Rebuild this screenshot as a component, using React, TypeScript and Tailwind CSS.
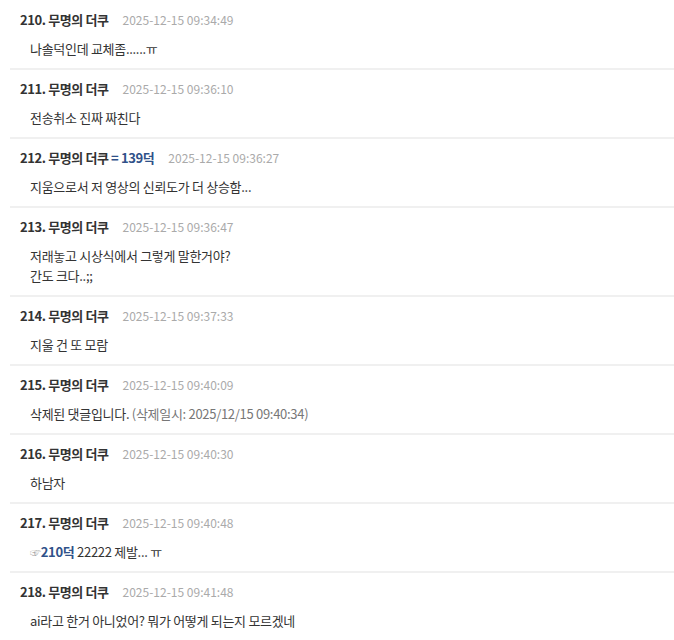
type Comment = {
  no: number;
  time: string;
  lines: React.ReactNode[];
  tag?: string;
};

const comments: Comment[] = [
  { no: 210, time: "2025-12-15 09:34:49", lines: ["나솔덕인데 교체좀......ㅠ"] },
  { no: 211, time: "2025-12-15 09:36:10", lines: ["전송취소 진짜 짜친다"] },
  {
    no: 212,
    time: "2025-12-15 09:36:27",
    tag: "= 139덕",
    lines: ["지움으로서 저 영상의 신뢰도가 더 상승함..."],
  },
  {
    no: 213,
    time: "2025-12-15 09:36:47",
    lines: ["저래놓고 시상식에서 그렇게 말한거야?", "간도 크다..;;"],
  },
  { no: 214, time: "2025-12-15 09:37:33", lines: ["지울 건 또 모람"] },
  {
    no: 215,
    time: "2025-12-15 09:40:09",
    lines: [
      <>
        삭제된 댓글입니다. <span className="text-[#777]">(삭제일시: 2025/12/15 09:40:34)</span>
      </>,
    ],
  },
  { no: 216, time: "2025-12-15 09:40:30", lines: ["하남자"] },
  {
    no: 217,
    time: "2025-12-15 09:40:48",
    lines: [
      <>
        <span className="text-[#aaa] text-[11px]">☞</span>
        <span className="font-bold text-[#2f5189]">210덕</span> 22222 제발... ㅠ
      </>,
    ],
  },
  {
    no: 218,
    time: "2025-12-15 09:41:48",
    lines: ["ai라고 한거 아니었어? 뭐가 어떻게 되는지 모르겠네"],
  },
];

export default function App() {
  return (
    <div
      className="min-h-screen bg-white text-[#333]"
      style={{ fontFamily: '"Noto Sans CJK KR", "Noto Sans", sans-serif' }}
    >
      <ul className="ml-[10px]">
        {comments.map((c, i) => (
          <li
            key={c.no}
            className={`border-b-2 border-[#f0f0f0] pl-[10px] pb-[9px] ${i === 0 ? "pt-[10px]" : "pt-[9px]"}`}
          >
            <div className="flex items-center h-5 leading-5">
              <span className="text-[13px] font-bold tracking-[-0.4px]">
                {c.no}. 무명의 더쿠
                {c.tag && <span className="text-[#2f5189]"> {c.tag}</span>}
              </span>
              <span className="ml-[14px] text-[12px] text-[#aaa]">{c.time}</span>
            </div>
            <div className="mt-[9px] pl-[10px] text-[13px] leading-5 tracking-[-0.3px]">
              {c.lines.map((l, j) => (
                <div key={j}>{l}</div>
              ))}
            </div>
          </li>
        ))}
      </ul>
    </div>
  );
}
